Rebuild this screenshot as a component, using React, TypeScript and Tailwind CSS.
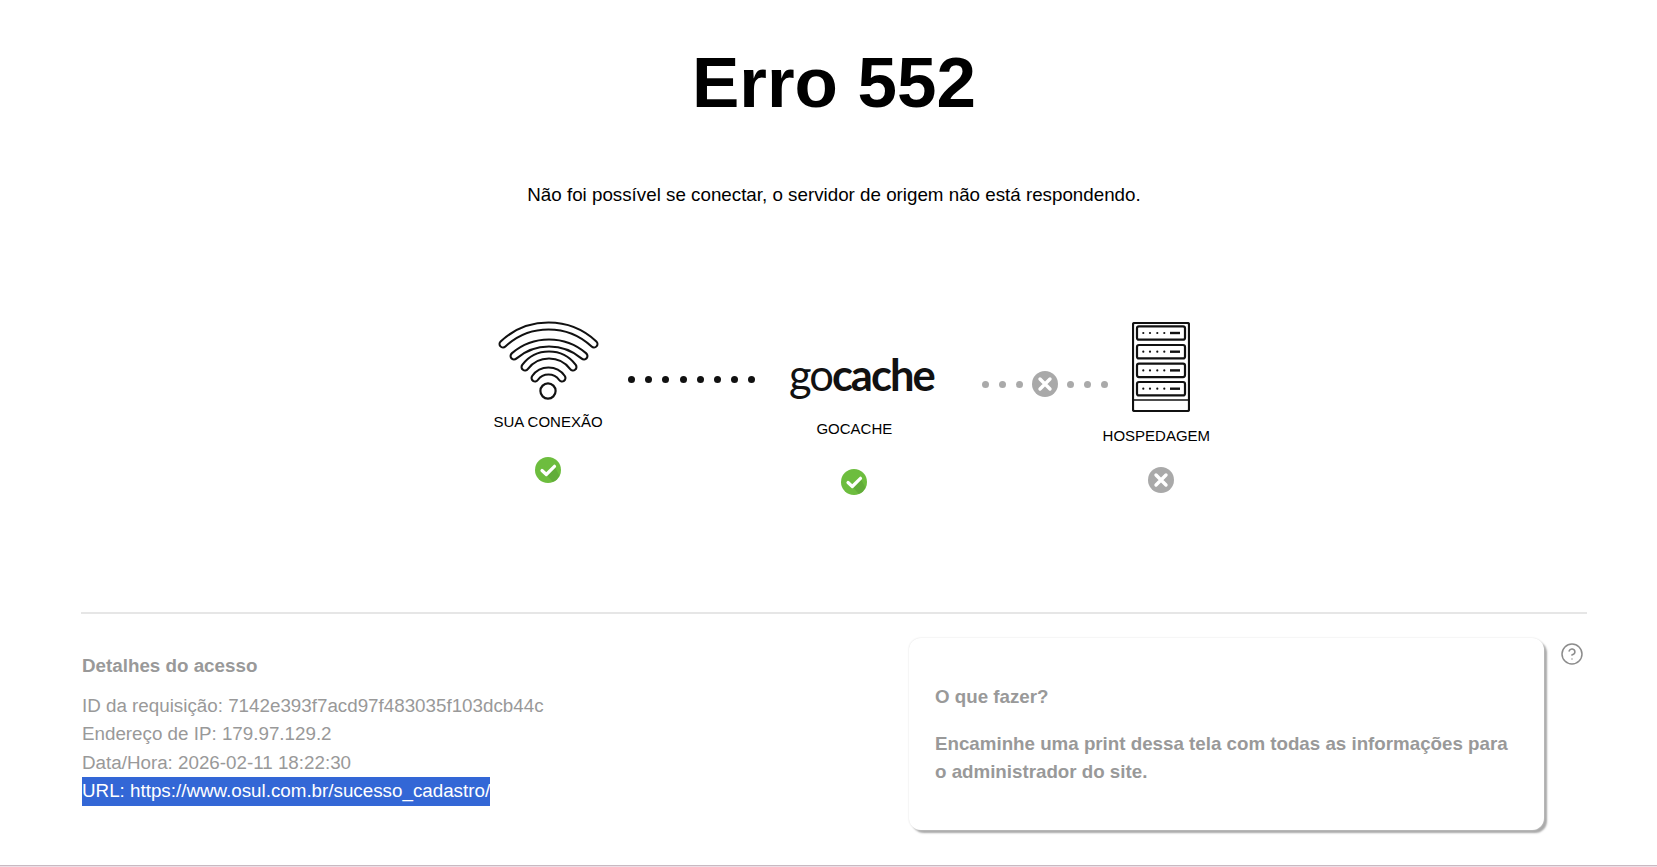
import { CircleHelp } from "lucide-react";

const WifiIcon = () => {
    const arcs = [
        "M8 26 A66.5 66.5 0 0 1 99 26",
        "M19 38 A53.6 53.6 0 0 1 89 38",
        "M30 49 A30 30 0 0 1 78 49",
        "M40 60 A16.5 16.5 0 0 1 67 60",
    ];
    return (
        <svg width="107" height="83" viewBox="0 0 107 83" fill="none" strokeLinecap="round">
            {arcs.map((d) => (
                <g key={d}>
                    <path d={d} stroke="#111" strokeWidth="9" />
                    <path d={d} stroke="#fff" strokeWidth="4.8" />
                </g>
            ))}
            <circle cx="53" cy="73" r="7.6" stroke="#111" strokeWidth="2.2" />
        </svg>
    );
};

const ServerIcon = () => {
    const units = [4.3, 23, 41.7, 60];
    return (
        <svg width="58" height="90" viewBox="0 0 58 90" fill="none" stroke="#111">
            <rect x="1" y="1" width="56" height="88" rx="1.5" strokeWidth="2.2" />
            <path d="M1 78 H57" strokeWidth="1.6" />
            {units.map((y) => (
                <g key={y}>
                    <rect x="5" y={y} width="48" height="13.4" rx="2" strokeWidth="2.2" />
                    {[11.3, 18, 25.3, 32.3].map((x) => (
                        <circle key={x} cx={x} cy={y + 6.7} r="1.1" fill="#111" stroke="none" />
                    ))}
                    <path d={`M38 ${y + 6.7} H48`} strokeWidth="2.4" />
                </g>
            ))}
        </svg>
    );
};

const CheckBadge = () => (
    <svg width="26" height="26" viewBox="0 0 26 26">
        <circle cx="13" cy="13" r="13" fill="#6dbd3e" />
        <path d="M11.3 17.5 L19.5 9.3 L24.6 18.9 A13 13 0 0 1 17.8 25.1 Z" fill="#5aa034" opacity="0.55" />
        <path d="M7 13.5 L11.3 17.5 L19.5 9.3" fill="none" stroke="#fff" strokeWidth="3.2" strokeLinecap="round" strokeLinejoin="round" />
    </svg>
);

const CrossBadge = () => (
    <svg width="26" height="26" viewBox="0 0 26 26">
        <circle cx="13" cy="13" r="13" fill="#a9a9a9" />
        <path d="M8 8 L18 18 M18 8 L8 18" fill="none" stroke="#fff" strokeWidth="3.4" strokeLinecap="round" />
    </svg>
);

const Dots = ({ count, gap, color }: { count: number; gap: string; color: string }) => (
    <div className={`flex ${gap}`}>
        {Array.from({ length: count }).map((_, i) => (
            <span key={i} className={`block h-[7px] w-[7px] rounded-full ${color}`} />
        ))}
    </div>
);

export default function App() {
    return (
        <div className="flex h-[867px] flex-col overflow-hidden bg-white font-['Liberation_Sans',Arial,sans-serif] text-black">
            <div className="ml-[81px] w-[1506px] flex-1">
                <h1 className="mt-[43px] text-center text-[71px] leading-[80px] font-bold">Erro 552</h1>
                <p className="mt-[58px] text-center text-[18.78px] leading-[28px]">
                    Não foi possível se conectar, o servidor de origem não está respondendo.
                </p>

                {/* Diagrama */}
                <div className="mt-[109px] flex h-[294px] items-start pl-[397px]">
                    <div className="flex w-[140px] flex-col items-center">
                        <WifiIcon />
                        <span className="mt-[11px] text-[15px] leading-[20px]">SUA CONEXÃO</span>
                        <div className="mt-[25px]">
                            <CheckBadge />
                        </div>
                    </div>

                    <div className="mt-[58px] ml-[10px]">
                        <Dots count={8} gap="gap-[10.2px]" color="bg-[#111]" />
                    </div>

                    <div className="flex w-[198px] flex-col items-center">
                        <div className="mt-[31px] ml-[14px] h-[50px] font-['Lato',sans-serif] text-[43.5px] leading-[50px] tracking-[-2px] whitespace-nowrap text-[#111]">
                            <span className="font-normal">go</span>
                            <span className="font-bold">cache</span>
                        </div>
                        <span className="mt-[20px] text-[15px] leading-[20px]">GOCACHE</span>
                        <div className="mt-[30px]">
                            <CheckBadge />
                        </div>
                    </div>

                    <div className="mt-[53px] ml-[29px] flex items-center">
                        <Dots count={3} gap="gap-[10px]" color="bg-[#aaa]" />
                        <div className="mx-[9px]">
                            <CrossBadge />
                        </div>
                        <Dots count={3} gap="gap-[10px]" color="bg-[#aaa]" />
                    </div>

                    <div className="-ml-[6px] flex w-[108px] flex-col items-center">
                        <div className="mt-[4px] ml-[10px]">
                            <ServerIcon />
                        </div>
                        <span className="mt-[14px] text-[15px] leading-[20px]">HOSPEDAGEM</span>
                        <div className="mt-[21px] ml-[10px]">
                            <CrossBadge />
                        </div>
                    </div>
                </div>

                <hr className="border-t-2 border-[#e6e6e6]" />

                {/* Detalhes */}
                <div className="flex items-start pt-[24px]">
                    <div className="w-[828px] pt-[14px] pl-[1px] text-[18.8px] leading-[28.5px] text-[#999]">
                        <h2 className="mb-[11px] font-bold">Detalhes do acesso</h2>
                        <p>ID da requisição: 7142e393f7acd97f483035f103dcb44c</p>
                        <p>Endereço de IP: 179.97.129.2</p>
                        <p>Data/Hora: 2026-02-11 18:22:30</p>
                        <p className="w-fit bg-[#3367d6] text-white">URL: https://www.osul.com.br/sucesso_cadastro/</p>
                    </div>
                    <div className="h-[192px] w-[635px] rounded-[12px] bg-white pt-[45px] pr-[25px] pl-[26px] text-[18.74px] leading-[28px] font-bold text-[#999] shadow-[0_0_2px_#dcdcdc,3px_3px_2px_#a8a8a8]">
                        <h3 className="mb-[19px]">O que fazer?</h3>
                        <p>Encaminhe uma print dessa tela com todas as informações para o administrador do site.</p>
                    </div>
                    <CircleHelp className="mt-[4px] ml-[16px] h-[24px] w-[24px] text-[#8c8c8c]" strokeWidth={1.5} />
                </div>
            </div>

            <div className="h-[2px] border-t border-[#c9b9c2] bg-[#ecdfe6]" />
        </div>
    );
}
